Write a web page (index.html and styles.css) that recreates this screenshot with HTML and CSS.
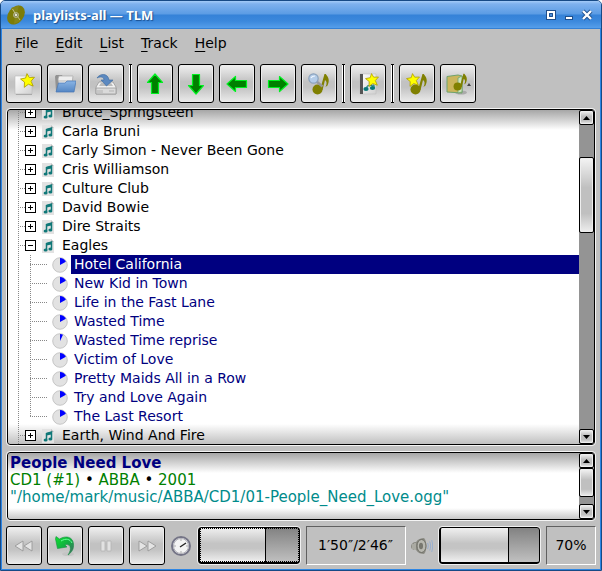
FILE: index.html
```html
<!DOCTYPE html>
<html lang="en">
<head>
<meta charset="utf-8">
<title>playlists-all — TLM</title>
<link rel="stylesheet" href="styles.css">
</head>
<body>
<svg class="defs" aria-hidden="true">
  <defs>
    <linearGradient id="paper" x1="0" y1="0" x2="1" y2="1"><stop offset="0" stop-color="#fff"/><stop offset="1" stop-color="#d0d0d0"/></linearGradient>
    <linearGradient id="blue" x1="0" y1="0" x2="0" y2="1"><stop offset="0" stop-color="#8ab4e4"/><stop offset="1" stop-color="#5486c4"/></linearGradient>
    <linearGradient id="green" x1="0" y1="0" x2="1" y2="1"><stop offset="0" stop-color="#10e030"/><stop offset=".5" stop-color="#10b040"/><stop offset="1" stop-color="#506070"/></linearGradient>
    <symbol id="star" viewBox="0 0 14 14"><path d="M6.500 .6 8.700 4.200l4.800-.2-3.200 3.600 2 4.600-4.500-1.700L4 13.400l.2-4.900L.5 5.600l4.700-.9z" fill="#ff0" stroke="#b0a000" stroke-width=".8"/></symbol>
    <symbol id="note" viewBox="0 0 18 22"><circle cx="5.500" cy="16.500" r="5" fill="#808000"/><path d="M8 17 12.500 1h1.200c3.300 4 4 6.500 1.800 11.500l-2 1.500c1.700-3.500 1.400-5.500-.5-7L10.500 17z" fill="#808000"/></symbol>
    <symbol id="arrow" viewBox="0 0 22 22"><path d="M11 1 18.500 9.500h-4V20.500h-7V9.500h-4z" fill="#008000" stroke="#00f020" stroke-width="1.200" stroke-linejoin="round"/></symbol>
    <symbol id="list" viewBox="0 0 12 14"><path d="M0 0h9l3 3v11H0z" fill="#e2e2e2"/><path d="M9 0v3h3z" fill="#bbb"/><path d="M4.500 10.500V4.500L9.500 3v6.500" fill="none" stroke="#107878" stroke-width="1.500"/><path d="M4.500 4 9.500 3v2.500l-5 1z" fill="#107878"/><ellipse cx="3.600" cy="11" rx="2" ry="1.600" fill="#107878"/><ellipse cx="8.400" cy="10" rx="2" ry="1.600" fill="#107878"/></symbol>
    <symbol id="pie" viewBox="0 0 16 16"><circle cx="8" cy="8" r="7.300" fill="#e2e2e2" stroke="#bcbcbc" stroke-width=".8"/><path d="M8 8V1a7 7 0 0 1 5.900 3.800z" fill="#00f"/></symbol>
    <symbol id="pie-short" viewBox="0 0 16 16"><circle cx="8" cy="8" r="7.300" fill="#e2e2e2" stroke="#bcbcbc" stroke-width=".8"/><path d="M8 8V1a7 7 0 0 1 3 .7z" fill="#00f"/></symbol>
  </defs>
</svg>
<div class="window">
  <header class="titlebar">
    <svg class="logo" viewBox="0 0 20 20"><ellipse cx="10" cy="10" rx="7.600" ry="10.600" transform="rotate(38 10 10)" fill="#7c7c08"/><path d="m5 3 5.500 7L13 .5z" fill="#858518"/><path d="m9 11 6 5-7 3z" fill="#858518"/><circle cx="10" cy="10" r="2.600" fill="#8f9058" stroke="#b4b490" stroke-width=".8"/><path d="m6.500 4 3 5M11.500 11.500l2.500 3.500" stroke="#d0d0a0" stroke-width=".8"/><circle cx="10" cy="10" r="1" fill="#fff"/></svg>
    <h1>playlists-all — TLM</h1>
    <div class="controls">
      <button aria-label="Maximize"><svg viewBox="0 0 12 12"><path d="M1 1h10v10H1z" fill="#1f4f8c"/><path d="M3 3h6v6H3z" fill="#4a8cd8" stroke="#fff" stroke-width="2"/><path d="M4.500 4.500h3v3h-3z" fill="none" stroke="#1f4f8c"/></svg></button>
      <button aria-label="Minimize"><svg viewBox="0 0 12 12"><path d="M2 7h8v4H2z" fill="#1f4f8c"/><path d="M3 8h6v2H3z" fill="#fff"/></svg></button>
      <button aria-label="Close"><svg viewBox="0 0 12 12"><path d="m2 2 8 8M10 2l-8 8" stroke="#1f4f8c" stroke-width="4"/><path d="m2 2 8 8M10 2l-8 8" stroke="#fff" stroke-width="2.400"/></svg></button>
    </div>
  </header>
  <main class="content">
    <nav class="menubar">
      <button><u>F</u>ile</button><button><u>E</u>dit</button><button><u>L</u>ist</button><button><u>T</u>rack</button><button><u>H</u>elp</button>
    </nav>
    <div class="toolbar">
      <button class="tool" aria-label="New list"><svg viewBox="0 0 22 22"><path d="M2 3h17v18H2z" fill="url(#paper)" stroke="#bbb" stroke-width=".6"/><path d="M3 21.500h16" stroke="#999" stroke-width=".7"/><use href="#star" x="7" y="0" width="15" height="15"/></svg></button>
      <button class="tool" aria-label="Open list"><svg viewBox="0 0 22 22"><path d="M1 3.500 2 2h6l1 2h10v14H2z" fill="#929292"/><path d="m4 6 1-3h14l-1 9H5z" fill="#eee" stroke="#aaa" stroke-width=".7"/><path d="M5 8h13" stroke="#bbb"/><path d="M4.500 10H11l2-2h9l-2 11H2z" fill="url(#blue)" stroke="#4877b4" stroke-width=".7"/></svg></button>
      <button class="tool" aria-label="Save list"><svg viewBox="0 0 22 22"><path d="m4 9-3 5v7h20v-7l-3-5z" fill="#f0f0f0" stroke="#999" stroke-width=".8"/><path d="M1 15h20v6H1z" fill="#dadada" stroke="#999" stroke-width=".8"/><path d="m4 13 2-3h10l2 3z" fill="#bbb"/><path d="M14 18h5M3 17v3M5 17v3M7 17v3" stroke="#aaa" stroke-width=".8"/><path d="M2 5C5 0 13 0 14 7h4l-6.500 6L6 7h3c0-3-3-4-7-2z" fill="#5c89c0" stroke="#3d6a9f" stroke-width=".6"/></svg></button>
      <span class="separator"></span>
      <button class="tool" aria-label="Move up"><svg viewBox="0 0 22 22"><use href="#arrow"/></svg></button>
      <button class="tool" aria-label="Move down"><svg viewBox="0 0 22 22"><use href="#arrow" transform="rotate(180 11 11)"/></svg></button>
      <button class="tool" aria-label="Move left"><svg viewBox="0 0 22 22"><use href="#arrow" transform="rotate(-90 11 11)"/></svg></button>
      <button class="tool" aria-label="Move right"><svg viewBox="0 0 22 22"><use href="#arrow" transform="rotate(90 11 11)"/></svg></button>
      <button class="tool" aria-label="Find track"><svg viewBox="0 0 22 22"><use href="#note" x="4" y="0" width="18" height="22"/><path d="m8.500 8.500 6 5" stroke="#999" stroke-width="2.400"/><circle cx="5.500" cy="5.500" r="4.700" fill="#b4cce8" stroke="#8ba2bc" stroke-width="1.200"/><path d="M3 5c1-2 2-2 4-2" stroke="#eef6ff" stroke-width="1.200" fill="none"/></svg></button>
      <span class="separator"></span>
      <button class="tool" aria-label="New list from tracks"><svg viewBox="0 0 22 22"><path d="M3 1h16v20H3z" fill="url(#paper)" stroke="#bbb" stroke-width=".5"/><path d="M3 1h3v20H3z" fill="#555"/><path d="M10 16v-3l7-1v3" fill="none" stroke="#087878" stroke-width="1"/><ellipse cx="9" cy="16" rx="2.600" ry="2" fill="#087878"/><ellipse cx="15.500" cy="15" rx="2.600" ry="2" fill="#087878"/><use href="#star" x="8" y="0" width="14" height="14"/></svg></button>
      <span class="separator"></span>
      <button class="tool" aria-label="New track"><svg viewBox="0 0 22 22"><use href="#note" x="4" y="0" width="18" height="22"/><use href="#star" x="0" y="0" width="14" height="14"/></svg></button>
      <button class="tool" aria-label="Track menu"><svg viewBox="0 0 26 22"><ellipse cx="16" cy="19.500" rx="6" ry="2" fill="#aaa"/><path d="M2 3.500 13 2l4 1v17l-15-1z" fill="#cbb65c" stroke="#6fa36c"/><path d="M13 20V5l4-2v16z" fill="#d0e4bc" stroke="#6fa36c" stroke-width=".8"/><use href="#note" x="8" y="0" width="15" height="18"/><path d="m22 13 2-3 2 3z" fill="#444"/></svg></button>
    </div>
    <section class="panel tree-panel" aria-label="Playlists">
      <ul class="tree">
        <li><div class="row"><button class="expander" aria-label="Expand"></button><svg class="list-icon"><use href="#list"/></svg><span>Bruce_Springsteen</span></div></li>
        <li><div class="row"><button class="expander" aria-label="Expand"></button><svg class="list-icon"><use href="#list"/></svg><span>Carla Bruni</span></div></li>
        <li><div class="row"><button class="expander" aria-label="Expand"></button><svg class="list-icon"><use href="#list"/></svg><span>Carly Simon - Never Been Gone</span></div></li>
        <li><div class="row"><button class="expander" aria-label="Expand"></button><svg class="list-icon"><use href="#list"/></svg><span>Cris Williamson</span></div></li>
        <li><div class="row"><button class="expander" aria-label="Expand"></button><svg class="list-icon"><use href="#list"/></svg><span>Culture Club</span></div></li>
        <li><div class="row"><button class="expander" aria-label="Expand"></button><svg class="list-icon"><use href="#list"/></svg><span>David Bowie</span></div></li>
        <li><div class="row"><button class="expander" aria-label="Expand"></button><svg class="list-icon"><use href="#list"/></svg><span>Dire Straits</span></div></li>
        <li><div class="row"><button class="expander open" aria-label="Collapse"></button><svg class="list-icon"><use href="#list"/></svg><span>Eagles</span></div>
          <ul class="tracks">
            <li class="track selected"><svg class="pie"><use href="#pie"/></svg><span>Hotel California</span></li>
            <li class="track"><svg class="pie"><use href="#pie"/></svg><span>New Kid in Town</span></li>
            <li class="track"><svg class="pie"><use href="#pie"/></svg><span>Life in the Fast Lane</span></li>
            <li class="track"><svg class="pie"><use href="#pie"/></svg><span>Wasted Time</span></li>
            <li class="track"><svg class="pie"><use href="#pie-short"/></svg><span>Wasted Time reprise</span></li>
            <li class="track"><svg class="pie"><use href="#pie"/></svg><span>Victim of Love</span></li>
            <li class="track"><svg class="pie"><use href="#pie"/></svg><span>Pretty Maids All in a Row</span></li>
            <li class="track"><svg class="pie"><use href="#pie"/></svg><span>Try and Love Again</span></li>
            <li class="track"><svg class="pie"><use href="#pie"/></svg><span>The Last Resort</span></li>
          </ul>
        </li>
        <li><div class="row"><button class="expander" aria-label="Expand"></button><svg class="list-icon"><use href="#list"/></svg><span>Earth, Wind And Fire</span></div></li>
      </ul>
      <div class="scrollbar">
        <button aria-label="Scroll up"><svg viewBox="0 0 7 4"><path d="M0 4 3.500 0 7 4z"/></svg></button>
        <div class="trough"><div class="thumb list-thumb"></div></div>
        <button aria-label="Scroll down"><svg viewBox="0 0 7 4"><path d="M0 0h7L3.500 4z"/></svg></button>
      </div>
    </section>
    <section class="panel info-panel" aria-label="Current track">
      <div class="info">
        <p class="song">People Need Love</p>
        <p class="album">CD1 (#1) <b>•</b> ABBA <b>•</b> 2001</p>
        <p class="path">"/home/mark/music/ABBA/CD1/01-People_Need_Love.ogg"</p>
      </div>
      <div class="scrollbar">
        <button aria-label="Scroll up"><svg viewBox="0 0 7 4"><path d="M0 4 3.500 0 7 4z"/></svg></button>
        <div class="trough"><div class="thumb info-thumb"></div></div>
        <button aria-label="Scroll down"><svg viewBox="0 0 7 4"><path d="M0 0h7L3.500 4z"/></svg></button>
      </div>
    </section>
    <footer class="player">
      <button class="tool" aria-label="Previous"><svg viewBox="0 0 22 22"><path d="M10 6v10L2 11zM19 6v10l-8-5z" fill="#e4e4e4" stroke="#999" stroke-width=".9"/></svg></button>
      <button class="tool" aria-label="Replay"><svg viewBox="0 0 22 22"><ellipse cx="14" cy="19" rx="6" ry="2" fill="#c4c4c4"/><path d="M2 1.500 5.500 4C12 0 19 2 19.500 9c.4 5-1.500 8-5.500 11 2-3 3-6 2-8.500-1-2-3-2.500-5-1.500l2 2-9.500 1.500L1.500 4z" fill="url(#green)" stroke="#159040" stroke-width=".6"/><path d="M7 6c5-3 9-2 11 2" fill="none" stroke="#6f9" stroke-width="1"/></svg></button>
      <button class="tool" aria-label="Pause"><svg viewBox="0 0 22 22"><path d="M6 6h4v10H6zM12 6h4v10h-4z" fill="#e2e2e2" stroke="#b4b4b4" stroke-width=".8"/></svg></button>
      <button class="tool" aria-label="Next"><svg viewBox="0 0 22 22"><path d="M3 6v10l8-5zM12 6v10l8-5z" fill="#e4e4e4" stroke="#999" stroke-width=".9"/></svg></button>
      <svg class="status-icon" viewBox="0 0 22 22"><circle cx="11" cy="11" r="9" fill="#f4f4f4" stroke="#747486" stroke-width="2"/><circle cx="11" cy="11" r="7.500" fill="none" stroke="#b0b0b8"/><path d="m10 12 6-4" stroke="#222" stroke-width="1.300"/><path d="M11 4v2M11 16v2M4 11h2M16 11h2" stroke="#aaa"/></svg>
      <input class="meter position" type="range" min="0" max="166" value="110" aria-label="Position">
      <output class="readout time">1′50″/2′46″</output>
      <svg class="status-icon" viewBox="0 0 22 22"><path d="M0 12c0-3 2-5 5-5 2-3 5-4 8-4 3 2 3 14 0 16-3 0-6-1-8-4-3 0-5-1-5-3z" fill="#8c8c84"/><ellipse cx="10.500" cy="11" rx="4.500" ry="6.500" fill="#b8b8b0" stroke="#6c6c64"/><ellipse cx="10" cy="11" rx="2" ry="3.300" fill="#77776f"/><path d="M2 9v5M4 8v7" stroke="#c8c8c0"/><path d="M16.500 8c1 2 1 4 0 6M18.700 6.500c1.300 3 1.300 6 0 9M20.700 5c1.300 4 1.300 8 0 12" fill="none" stroke="#8eaad0" stroke-width=".8"/></svg>
      <input class="meter volume" type="range" min="0" max="100" value="70" aria-label="Volume">
      <output class="readout percent">70%</output>
    </footer>
  </main>
</div>
</body>
</html>
```
FILE: styles.css
```css
* {
  box-sizing: border-box;
}

body {
  margin: 0;
  background: #fff;
  color: #000;
  font: 14px/19px "DejaVu Sans", sans-serif;
}

ul,
p,
h1 {
  margin: 0;
  padding: 0;
  list-style: none;
}

button {
  margin: 0;
  padding: 0;
  border: 0;
  background: none;
  color: inherit;
  font: inherit;
}

svg {
  display: block;
  flex: none;
}

.defs {
  position: absolute;
  width: 0;
  height: 0;
}

.window {
  display: flex;
  flex-direction: column;
  height: 100vh;
  overflow: hidden;
  border: 1px solid #174a86;
  border-radius: 5px 5px 0 0;
  background: #c0c0c0;
}

.titlebar {
  display: flex;
  align-items: center;
  gap: 7px;
  flex: none;
  height: 28px;
  padding: 0 8px 0 5px;
  border-bottom: 1px solid #3480d4;
  background: linear-gradient(#a4cbf8 0, #7eb1ee 3px, #5b9ce4 13px, #3582d8 14px, #3b88dc 20px, #559eea 27px);
}

.logo {
  width: 20px;
  height: 20px;
}

.titlebar h1 {
  flex: 1;
  color: #fff;
  font: bold 13px/20px "Noto Sans", sans-serif;
  text-shadow: 1px 1px 1px #1c5090;
}

.controls {
  display: flex;
  gap: 6px;
}

.controls svg {
  width: 12px;
  height: 12px;
}

.content {
  display: flex;
  flex: 1;
  flex-direction: column;
  min-height: 0;
  padding: 0 4px 4px;
  border: solid #2e86e4;
  border-width: 0 1px 1px;
}

.menubar {
  display: flex;
  gap: 17px;
  padding: 4px 9px 11px;
}

.menubar button {
  line-height: 20px;
}

.menubar u {
  text-underline-offset: 3px;
}

.toolbar {
  display: flex;
  gap: 5px;
  margin-bottom: 6px;
}

.tool {
  display: flex;
  align-items: center;
  justify-content: center;
  flex: none;
  width: 36px;
  height: 39px;
  border: 1px solid #000;
  border-radius: 3px;
  background: linear-gradient(#f0f0f0, #c2c2c2 45%, #c2c2c2 60%, #ebebeb);
  box-shadow: inset 0 0 0 1px #ececec;
}

.tool svg {
  height: 22px;
}

.separator {
  width: 3px;
  border: solid #000;
  border-width: 1px 0;
  background: linear-gradient(90deg, #fff 1px, #000 1px 2px, #fff 2px);
}

.panel {
  display: flex;
  border: 1px solid #000;
  border-radius: 3px;
  outline: 1px solid #f4f4f4;
  margin: 0 1px;
  overflow: hidden;
}

.tree-panel {
  flex: 1;
  min-height: 0;
  margin-bottom: 7px;
  background: linear-gradient(#a6a6a6, #fff 20px, #fff calc(100% - 20px), #c0c0c0);
}

.tree {
  flex: 1;
  margin-top: -7px;
  background: repeating-linear-gradient(#888 0 1px, transparent 1px 2px) 10px 0 / 1px 100% no-repeat;
}

.row,
.track {
  display: flex;
  align-items: center;
  height: 19px;
  white-space: nowrap;
}

.row {
  gap: 6px;
  padding-left: 17px;
  background: repeating-linear-gradient(90deg, #888 0 1px, transparent 1px 2px) 12px 9px / 5px 1px no-repeat;
}

.row span {
  padding-left: 2px;
}

.expander {
  width: 11px;
  height: 11px;
  border: 1px solid #000;
  background:
    linear-gradient(#000, #000) center / 5px 1px no-repeat,
    linear-gradient(#000, #000) center / 1px 5px no-repeat,
    #fff;
}

.expander.open {
  background: linear-gradient(#000, #000) center / 5px 1px no-repeat, #fff;
}

.list-icon {
  width: 12px;
  height: 14px;
}

.tracks {
  background: repeating-linear-gradient(#888 0 1px, transparent 1px 2px) 22px 0 / 1px calc(100% - 9px) no-repeat;
  color: #000080;
}

.track {
  gap: 3px;
  padding-left: 44px;
  background: repeating-linear-gradient(90deg, #888 0 1px, transparent 1px 2px) 22px 9px / 18px 1px no-repeat;
}

.track span {
  flex: 1;
  padding-left: 3px;
}

.track.selected span {
  background: #000080;
  color: #fff;
}

.pie {
  width: 16px;
  height: 16px;
}

.scrollbar {
  display: flex;
  flex: none;
  flex-direction: column;
  width: 15px;
  background: #949494;
}

.scrollbar button {
  display: flex;
  align-items: center;
  justify-content: center;
  height: 15px;
}

.scrollbar svg {
  width: 7px;
  height: 4px;
}

.scrollbar button,
.thumb {
  border: 1px solid #000;
  border-radius: 2px;
  background: linear-gradient(#f4f4f4, #c0c0c0 40%, #c0c0c0 75%, #eee);
  box-shadow: inset 0 0 0 1px #eee;
}

.trough {
  flex: 1;
}

.list-thumb {
  height: 25%;
  margin-top: 32px;
}

.info-thumb {
  height: 80%;
}

.info-panel {
  flex: none;
  height: 68px;
  margin-bottom: 6px;
  background: linear-gradient(#a6a6a6, #fff 20px, #fff calc(100% - 11px), #c8c8c8);
}

.info {
  flex: 1;
  min-width: 0;
  padding: 2px;
  font-size: 15px;
  line-height: 17px;
  white-space: nowrap;
}

.song {
  color: #000080;
  font-weight: bold;
}

.album {
  color: #008000;
}

.album b {
  color: #000;
  font-weight: normal;
}

.path {
  color: #008b8b;
}

.player {
  display: flex;
  align-items: center;
  gap: 5px;
}

.status-icon {
  width: 22px;
  height: 22px;
}

.meter {
  flex: 1;
  min-width: 0;
  height: 37px;
  margin: 0 1px;
  border: 2px solid #000;
  border-width: 1px 1px 2px 2px;
  border-radius: 3px;
  outline: 1px solid #f0f0f0;
  appearance: none;
  background:
    linear-gradient(#000, #000) var(--level) 0 / 1px 100% no-repeat,
    linear-gradient(#f0f0f0, #c4c4c4 45%, #c4c4c4 60%, #f0f0f0) 0 0 / var(--level) 100% no-repeat,
    linear-gradient(#828282, #c0c0c0);
}

.meter::-webkit-slider-thumb {
  width: 0;
  appearance: none;
}

.position {
  --level: 67%;
}

.position::-webkit-slider-runnable-track {
  height: 34px;
  border: 1px dotted #000;
}

.volume {
  --level: 69%;
}

.readout {
  display: flex;
  align-items: center;
  justify-content: center;
  flex: none;
  height: 39px;
  border: 1px solid;
  border-color: #606060 #fff #fff #606060;
}

.time {
  width: 100px;
}

.percent {
  width: 50px;
}
```
